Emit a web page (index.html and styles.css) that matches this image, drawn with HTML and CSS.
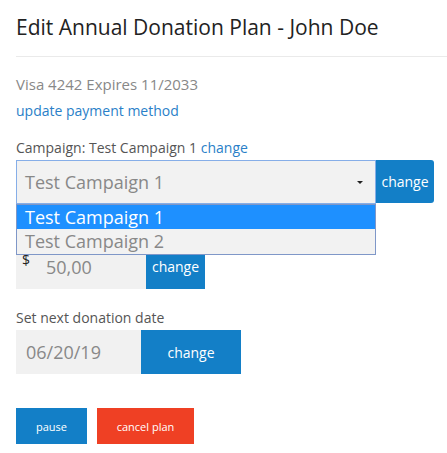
FILE: index.html
```html
<!DOCTYPE html>
<html>
<head>
<meta charset="utf-8">
<link rel="stylesheet" href="styles.css">
</head>
<body>
<div class="page">
  <h1 class="title">Edit Annual Donation Plan - John Doe</h1>
  <div class="rule"></div>
  <div class="card-info">Visa 4242 Expires 11/2033</div>
  <a class="link update-link" href="#">update payment method</a>

  <div class="field campaign">
    <div class="label campaign-label">Campaign: Test Campaign 1 <a class="link" href="#">change</a></div>
    <div class="row">
      <div class="select">
        <span class="select-value">Test Campaign 1</span>
        <span class="caret"></span>
        <ul class="options">
          <li class="option selected">Test Campaign 1</li>
          <li class="option">Test Campaign 2</li>
        </ul>
      </div>
      <button class="btn btn-blue btn-select">change</button>
    </div>
  </div>

  <div class="field amount">
    <div class="row">
      <div class="input amount-input"><span class="currency">$</span><span class="value">50,00</span></div>
      <button class="btn btn-blue btn-amount">change</button>
    </div>
  </div>

  <div class="field date">
    <div class="label date-label">Set next donation date</div>
    <div class="row">
      <div class="input date-input"><span class="value">06/20/19</span></div>
      <button class="btn btn-blue btn-date">change</button>
    </div>
  </div>

  <div class="actions">
    <button class="btn btn-blue btn-small btn-pause">pause</button>
    <button class="btn btn-red btn-small btn-cancel">cancel plan</button>
  </div>
</div>
</body>
</html>
```

FILE: styles.css
```css
* { box-sizing: border-box; }
html, body { margin: 0; padding: 0; background: #fff; }
body { font-family: "Open Sans", "Liberation Sans", sans-serif; color: #555; }

.page { padding: 0 0 0 16px; }

.title {
  margin: 12px 0 0;
  font-size: 21px;
  line-height: 30px;
  font-weight: 400;
  color: #222;
}

.rule {
  height: 1px;
  background: #eaeaea;
  margin-top: 14px;
}

.card-info {
  margin-top: 18px;
  font-size: 15px;
  line-height: 18px;
  color: #888;
}

.link { color: #2a7fc8; text-decoration: none; }

.update-link {
  display: block;
  margin-top: 9px;
  font-size: 14px;
  line-height: 18px;
}

.field { font-size: 14px; }
.label { line-height: 18px; margin-bottom: 3px; color: #555; }
.campaign-label { font-size: 14px; }
.date-label { font-size: 14px; }
.campaign { margin-top: 19px; }
.amount { margin-top: 41px; }
.date { margin-top: 20px; }

.row { display: flex; align-items: stretch; }

.select {
  position: relative;
  width: 360px;
  height: 44px;
  background: #f2f2f2;
  border: 1px solid #86aee8;
  display: flex;
  align-items: center;
  padding-left: 8px;
  font-size: 18px;
  color: #888;
}
.select-value { flex: 1; }
.caret {
  width: 0; height: 0;
  border-left: 3px solid transparent;
  border-right: 3px solid transparent;
  border-top: 3px solid #222;
  margin-right: 12px;
}

.options {
  position: absolute;
  left: -1px;
  top: 43px;
  width: 360px;
  margin: 0;
  padding: 0;
  list-style: none;
  background: #f2f2f2;
  border: 1px solid #7f97c8;
  z-index: 5;
}
.option {
  height: 25px;
  line-height: 25px;
  padding-left: 8px;
  font-size: 18px;
  color: #888;
}
.option.selected { background: #1e90ff; color: #fff; height: 24px; line-height: 24px; }

.btn {
  border: 0;
  margin: 0;
  font-family: "Open Sans", "Liberation Sans", sans-serif;
  color: #fff;
  cursor: pointer;
  padding: 0;
}
.btn-blue { background: #137fc7; }
.btn-red { background: #ef4024; }

.btn-select {
  width: 58px;
  height: 43px;
  font-size: 14px;
  border-radius: 0 3px 3px 0;
}

.input {
  background: #f1f1f1;
  height: 44px;
  display: flex;
  align-items: center;
}
.amount-input { width: 130px; position: relative; }
.currency {
  position: absolute;
  left: 6px;
  top: 5px;
  font-size: 14px;
  color: #222;
}
.amount-input .value { margin-left: 30px; font-size: 18px; color: #888; }
.btn-amount { width: 59px; height: 44px; font-size: 14px; padding-bottom: 2px; }

.date-input { width: 125px; }
.date-input .value { margin-left: 10px; font-size: 18px; color: #888; }
.btn-date { width: 100px; height: 44px; font-size: 14px; }

.actions { display: flex; gap: 10px; margin-top: 34px; }
.btn-small { height: 36px; font-size: 11px; }
.btn-pause { width: 71px; }
.btn-cancel { width: 97px; }
```
